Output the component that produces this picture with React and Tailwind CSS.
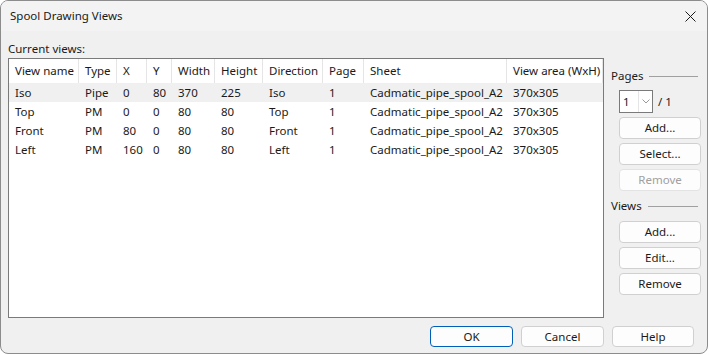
import React from "react";

const cols = [
  { key: "name", label: "View name", w: 70 },
  { key: "type", label: "Type", w: 38 },
  { key: "x", label: "X", w: 30 },
  { key: "y", label: "Y", w: 25 },
  { key: "width", label: "Width", w: 43 },
  { key: "height", label: "Height", w: 48 },
  { key: "dir", label: "Direction", w: 60 },
  { key: "page", label: "Page", w: 41 },
  { key: "sheet", label: "Sheet", w: 143 },
  { key: "area", label: "View area (WxH)", w: 96 },
];

const rows = [
  ["Iso", "Pipe", "0", "80", "370", "225", "Iso", "1", "Cadmatic_pipe_spool_A2", "370x305"],
  ["Top", "PM", "0", "0", "80", "80", "Top", "1", "Cadmatic_pipe_spool_A2", "370x305"],
  ["Front", "PM", "80", "0", "80", "80", "Front", "1", "Cadmatic_pipe_spool_A2", "370x305"],
  ["Left", "PM", "160", "0", "80", "80", "Left", "1", "Cadmatic_pipe_spool_A2", "370x305"],
];

function Btn({ children, disabled, primary, className = "" }) {
  return (
    <div
      className={
        "flex items-center justify-center rounded-[4px] border bg-[#fdfdfd] leading-none " +
        (primary
          ? "border-[#005fb8] text-[#1a1a1a] "
          : disabled
          ? "border-[#e3e3e3] bg-[#f5f5f5] text-[#a0a0a0] "
          : "border-[#d0d0d0] text-[#1a1a1a] ") +
        className
      }
    >
      {children}
    </div>
  );
}

function GroupLabel({ children }) {
  return (
    <div className="flex h-[16px] items-center">
      <span className="leading-[16px]">{children}</span>
      <div className="ml-[6px] mr-[3px] h-px flex-1 bg-[#a0a0a0]" />
    </div>
  );
}

export default function App() {
  return (
    <div
      className="h-[355px] w-[709px] bg-white text-[11.5px] text-[#1a1a1a]"
      style={{ fontFamily: '"Noto Sans", "Open Sans", sans-serif' }}
    >
      <div className="flex h-[354px] w-[708px] flex-col overflow-hidden rounded-[8px] border border-[#8c8c8c] bg-[#f0f0f0]">
        {/* Title bar */}
        <div className="flex h-[30px] shrink-0 items-center justify-between bg-[#f3f3f3] pl-[9px] pr-[10px]">
          <span className="leading-[16px]">Spool Drawing Views</span>
          <svg width="11" height="11" viewBox="0 0 11 11" className="mr-[1px]">
            <path d="M0.5 0.5 L10.5 10.5 M10.5 0.5 L0.5 10.5" stroke="#1a1a1a" strokeWidth="1" fill="none" />
          </svg>
        </div>

        {/* Body */}
        <div className="flex flex-1 flex-col pl-[7px] pt-[10px]">
          <div className="h-[16px] leading-[16px]">Current views:</div>
          <div className="mt-[1px] flex">
            {/* List */}
            <div className="h-[260px] w-[596px] border border-[#7a7a7a] bg-white">
              <div className="flex h-[24px]">
                {cols.map((c) => (
                  <div
                    key={c.key}
                    className="flex shrink-0 items-center border-r border-[#e5e5e5] pl-[6px] whitespace-nowrap"
                    style={{ width: c.w }}
                  >
                    {c.label}
                  </div>
                ))}
              </div>
              {rows.map((r, i) => (
                <div key={i} className={"flex h-[19px] " + (i === 0 ? "bg-[#f0f0f0]" : "")}>
                  {r.map((v, j) => (
                    <div
                      key={j}
                      className="flex shrink-0 items-center pl-[6px] whitespace-nowrap"
                      style={{ width: cols[j].w }}
                    >
                      {v}
                    </div>
                  ))}
                </div>
              ))}
            </div>

            {/* Right panel */}
            <div className="ml-[7px] flex w-[90px] flex-col pt-[10px]">
              <GroupLabel>Pages</GroupLabel>
              <div className="mt-[6px] flex items-center pl-[8px]">
                <div className="flex h-[23px] w-[34px] items-center border border-[#7a7a7a] bg-white">
                  <span className="w-[18px] pl-[3px]">1</span>
                  <div className="flex h-full flex-1 items-center justify-center border-l border-[#e5e5e5]">
                    <svg width="8" height="5" viewBox="0 0 8 5">
                      <path d="M0.5 0.5 L4 4 L7.5 0.5" stroke="#9a9a9a" strokeWidth="1" fill="none" />
                    </svg>
                  </div>
                </div>
                <span className="ml-[5px]">/ 1</span>
              </div>
              <div className="mt-[4px] flex flex-col gap-[4px] pl-[8px]">
                <Btn className="h-[22px] w-[82px]">Add...</Btn>
                <Btn className="h-[22px] w-[82px]">Select...</Btn>
                <Btn disabled className="h-[22px] w-[82px]">Remove</Btn>
              </div>
              <div className="mt-[7px]">
                <GroupLabel>Views</GroupLabel>
              </div>
              <div className="mt-[7px] flex flex-col gap-[4px] pl-[8px]">
                <Btn className="h-[22px] w-[82px]">Add...</Btn>
                <Btn className="h-[22px] w-[82px]">Edit...</Btn>
                <Btn className="h-[22px] w-[82px]">Remove</Btn>
              </div>
            </div>
          </div>

          {/* Bottom buttons */}
          <div className="mt-[8px] flex justify-end gap-[8px] pr-[13px]">
            <Btn primary className="h-[21px] w-[83px]">OK</Btn>
            <Btn className="h-[21px] w-[83px]">Cancel</Btn>
            <Btn className="h-[21px] w-[82px]">Help</Btn>
          </div>
        </div>
      </div>
    </div>
  );
}
